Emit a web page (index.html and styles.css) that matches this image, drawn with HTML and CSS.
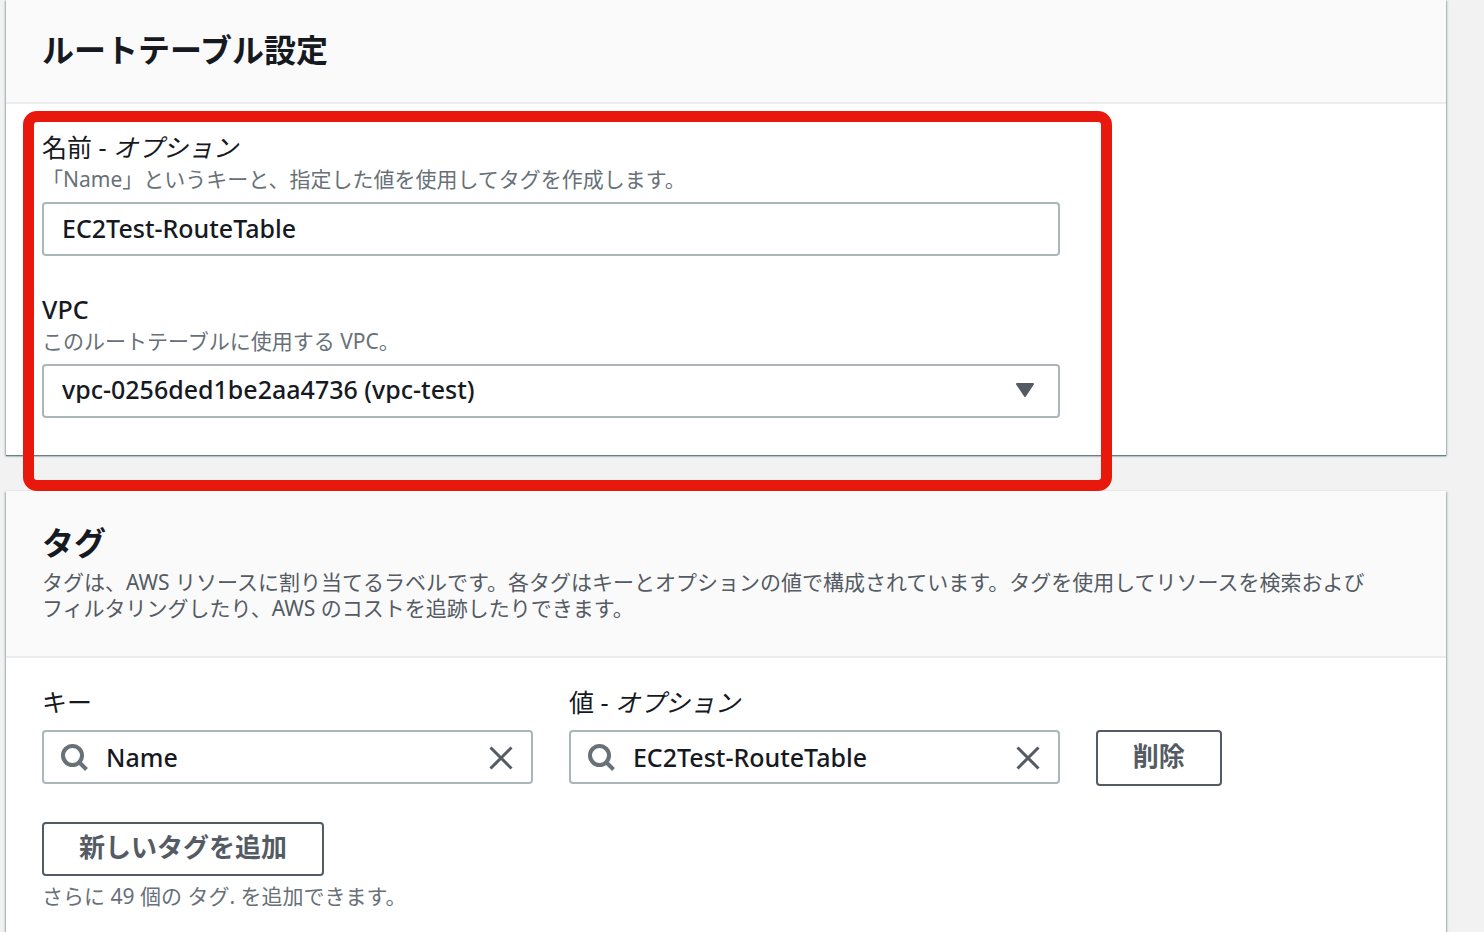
FILE: index.html
```html
<!DOCTYPE html>
<html lang="ja">
<head>
<meta charset="utf-8">
<title>ルートテーブル設定</title>
<link rel="stylesheet" href="styles.css">
</head>
<body>
<main class="page">
  <section class="panel panel-first">
    <header class="panel-header">
      <h2 class="title">ルートテーブル設定</h2>
    </header>
    <div class="panel-body settings-grid">
      <div class="fields">
        <div class="field">
          <label class="label" for="rt-name">名前 - <em>オプション</em></label>
          <p class="hint">「Name」というキーと、指定した値を使用してタグを作成します。</p>
          <input class="control" id="rt-name" type="text" value="EC2Test-RouteTable">
        </div>
        <div class="field">
          <label class="label label-strong" for="rt-vpc">VPC</label>
          <p class="hint">このルートテーブルに使用する VPC。</p>
          <div class="select-wrap">
            <select class="control" id="rt-vpc">
              <option>vpc-0256ded1be2aa4736 (vpc-test)</option>
            </select>
            <svg class="caret" viewBox="0 0 20 14" aria-hidden="true"><path d="M2 1h16L10 13z"/></svg>
          </div>
        </div>
        <div class="highlight"></div>
      </div>
    </div>
  </section>

  <section class="panel">
    <header class="panel-header">
      <h2 class="title">タグ</h2>
      <p class="description">タグは、AWS リソースに割り当てるラベルです。各タグはキーとオプションの値で構成されています。タグを使用してリソースを検索および<br>フィルタリングしたり、AWS のコストを追跡したりできます。</p>
    </header>
    <div class="panel-body">
      <div class="tag-grid">
        <div class="tag-field">
          <label class="label" for="tag-key">キー</label>
          <div class="search-box">
            <svg class="search-icon" viewBox="0 0 26 26" aria-hidden="true"><circle cx="10.500" cy="11.500" r="9.500"/><path d="M17 18L24.500 25.500"/></svg>
            <input class="search-input" id="tag-key" type="text" value="Name">
            <button class="clear" type="button" aria-label="クリア"><svg viewBox="0 0 24 24" aria-hidden="true"><path d="M1.500 1.500l21 21M22.500 1.500l-21 21"/></svg></button>
          </div>
        </div>
        <div class="tag-field">
          <label class="label" for="tag-value">値 - <em>オプション</em></label>
          <div class="search-box">
            <svg class="search-icon" viewBox="0 0 26 26" aria-hidden="true"><circle cx="10.500" cy="11.500" r="9.500"/><path d="M17 18L24.500 25.500"/></svg>
            <input class="search-input" id="tag-value" type="text" value="EC2Test-RouteTable">
            <button class="clear" type="button" aria-label="クリア"><svg viewBox="0 0 24 24" aria-hidden="true"><path d="M1.500 1.500l21 21M22.500 1.500l-21 21"/></svg></button>
          </div>
        </div>
        <button class="button remove" type="button">削除</button>
      </div>
      <button class="button add" type="button">新しいタグを追加</button>
      <p class="hint">さらに 49 個の タグ. を追加できます。</p>
    </div>
  </section>
</main>
</body>
</html>
```

FILE: styles.css
```css
* {
  box-sizing: border-box;
}

body {
  margin: 0;
  background: #f2f2f2;
  color: #16191f;
  font-family: "Noto Sans", "Noto Sans CJK JP", sans-serif;
  font-size: 25px;
  line-height: 28px;
  overflow: hidden;
}

h2, p {
  margin: 0;
}

input, select, button {
  font: inherit;
  color: inherit;
}

.page {
  display: flex;
  flex-direction: column;
  gap: 36px;
  min-height: 100vh;
  padding: 0 38px 0 6px;
}

.panel {
  background: #fff;
  box-shadow: 0 1px 1px #687f83, 1px 1px 2px #aab7b8, -1px 1px 2px #aab7b8;
}

.panel:last-child {
  flex: 1;
}

.panel-header {
  padding: 32px 36px 35px;
  border-bottom: 2px solid #eaeded;
  background: #fafafa;
}

.panel-first .panel-header {
  padding: 30px 36px 32px;
}

.title {
  font-size: 32px;
  line-height: 40px;
  font-weight: 700;
}

.description {
  margin-top: 6px;
  color: #545b64;
  font-size: 21px;
  line-height: 26px;
}

.panel-body {
  padding: 30px 36px 37px;
}

.panel-first .panel-body {
  padding-top: 29px;
}

.settings-grid,
.tag-grid {
  display: grid;
  grid-template-columns: 25fr 25fr 16fr;
  column-gap: 36px;
}

.fields {
  position: relative;
  grid-column: span 2;
  display: flex;
  flex-direction: column;
  gap: 39px;
}

.field {
  display: flex;
  flex-direction: column;
}

.label {
  display: block;
}

.label-strong {
  font-weight: 500;
}

.hint {
  color: #687078;
  font-size: 21px;
}

.field .hint {
  margin: 4px 0 9px;
}

.control {
  width: 100%;
  height: 54px;
  padding: 0 18px 2px;
  border: 2px solid #aab7b8;
  border-radius: 4px;
  background: #fff;
  appearance: none;
  font-weight: 500;
}

.select-wrap {
  position: relative;
  display: flex;
}

.select-wrap .control {
  padding-bottom: 4px;
}

.caret {
  position: absolute;
  top: 19px;
  right: 25px;
  width: 20px;
  height: 14px;
  fill: #545b64;
  stroke: #545b64;
  stroke-width: 2;
  stroke-linejoin: round;
  pointer-events: none;
}

.highlight {
  position: absolute;
  inset: -22px -52px -73px -19px;
  border: 11px solid #e8190c;
  border-radius: 14px;
  pointer-events: none;
}

.tag-field {
  display: flex;
  flex-direction: column;
  gap: 14px;
}

.search-box {
  display: flex;
  align-items: center;
  height: 54px;
  padding: 0 18px;
  border: 2px solid #aab7b8;
  border-radius: 4px;
}

.search-icon {
  flex: none;
  width: 26px;
  height: 26px;
  overflow: visible;
  fill: none;
  stroke: #687078;
  stroke-width: 4;
}

.search-input {
  flex: 1;
  min-width: 0;
  padding: 0 18px;
  border: 0;
  background: none;
  font-weight: 500;
}

.clear {
  display: flex;
  padding: 2px 0 0;
  border: 0;
  background: none;
}

.clear svg {
  width: 24px;
  height: 24px;
  fill: none;
  stroke: #545b64;
  stroke-width: 3;
}

.button {
  height: 54px;
  padding: 0 35px 4px;
  border: 2px solid #545b64;
  border-radius: 4px;
  background: #fff;
  color: #545b64;
  font-size: 26px;
  font-weight: 700;
}

.remove {
  align-self: end;
  justify-self: start;
  height: 56px;
  margin-bottom: -2px;
}

.add {
  display: block;
  margin: 38px 0 6px;
}
```
